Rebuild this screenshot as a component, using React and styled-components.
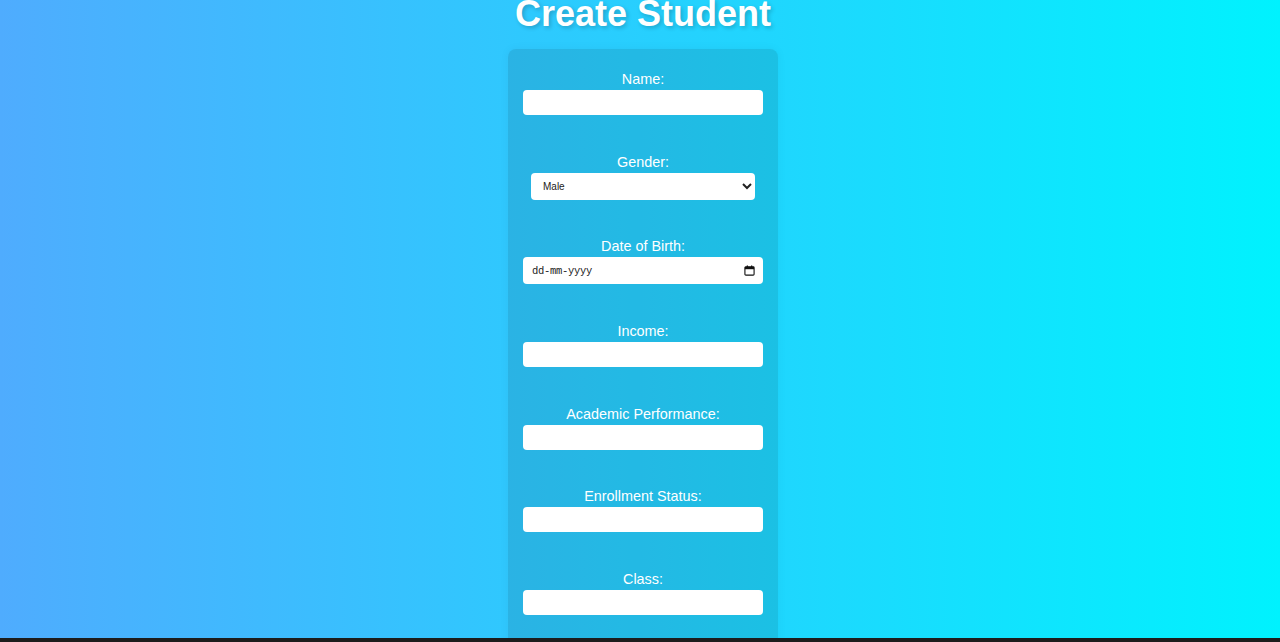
import React from "react";
import styled, { createGlobalStyle } from "styled-components";

const Global = createGlobalStyle`
  html, body { margin: 0; padding: 0; }
  body {
    min-height: 100vh;
    background: linear-gradient(to right, #4facfe 0%, #00f2fe 100%);
    background-attachment: fixed;
    font-family: "Liberation Sans", Arial, sans-serif;
    overflow: hidden;
  }
`;

const Page = styled.div`
  display: flex;
  flex-direction: column;
  align-items: center;
  padding-left: 6px;
`;

const Title = styled.h1`
  margin: -7px 0 14px;
  font-size: 36px;
  font-weight: bold;
  color: #fff;
  text-align: center;
  text-shadow: 2px 2px 4px rgba(0, 0, 0, 0.2);
`;

const Card = styled.form`
  width: 240px;
  padding: 22px 15px 30px;
  background: rgba(0, 0, 0, 0.1);
  border-radius: 8px;
  box-shadow: 0 0 10px rgba(0, 0, 0, 0.05);
  display: flex;
  flex-direction: column;
`;

const Group = styled.div`
  display: flex;
  flex-direction: column;
  align-items: center;
  margin-bottom: 38.67px;
`;

const Label = styled.label`
  display: block;
  color: #fff;
  font-size: 14.4px;
  line-height: 16px;
  margin-bottom: 3px;
  text-align: center;
`;

const TextInput = styled.input`
  box-sizing: border-box;
  width: 100%;
  height: 25px;
  border: none;
  border-radius: 4px;
  background: #fff;
  padding: 0 6px;
  font-family: "Liberation Sans", Arial, sans-serif;
  font-size: 12px;
  color: #222;
  outline: none;
`;

const DateBox = styled.div`
  box-sizing: border-box;
  width: 100%;
  height: 27px;
  border-radius: 4px;
  background: #fff;
  display: flex;
  align-items: center;
  padding: 0 8px 0 9px;
`;

const DateText = styled.input`
  flex: 1;
  min-width: 0;
  border: none;
  outline: none;
  background: transparent;
  padding: 0;
  font-family: "Liberation Mono", monospace;
  font-size: 10.5px;
  letter-spacing: -0.3px;
  color: #222;
  &::placeholder { color: #222; opacity: 1; }
`;

const CalIcon = styled.svg`
  width: 11px;
  height: 11px;
  flex: none;
`;

const Select = styled.select`
  box-sizing: border-box;
  width: 224px;
  height: 27px;
  border: none;
  border-radius: 4px;
  background: #fff;
  padding: 0 5px 0 8px;
  font-family: "Liberation Sans", Arial, sans-serif;
  font-size: 10px;
  color: #222;
  outline: none;
`;

const TaskStrip = styled.div`
  position: fixed;
  left: 0;
  right: 0;
  bottom: 0;
  height: 4px;
  background: #1c1c1c;
`;

const fields = [
  { label: "Name:", type: "text" },
  { label: "Gender:", type: "select" },
  { label: "Date of Birth:", type: "date" },
  { label: "Income:", type: "text" },
  { label: "Academic Performance:", type: "text" },
  { label: "Enrollment Status:", type: "text" },
  { label: "Class:", type: "text" },
];

function DateField() {
  return (
    <DateBox>
      <DateText type="text" placeholder="dd-mm-yyyy" />
      <CalIcon viewBox="0 0 12 12" aria-hidden="true">
        <rect x="1" y="2" width="10" height="9" rx="1" fill="none" stroke="#111" strokeWidth="1.2" />
        <rect x="1" y="2" width="10" height="2.6" fill="#111" />
        <rect x="3" y="0.5" width="1.3" height="2.5" fill="#111" />
        <rect x="7.7" y="0.5" width="1.3" height="2.5" fill="#111" />
      </CalIcon>
    </DateBox>
  );
}

export default function App() {
  return (
    <>
      <Global />
      <Page>
        <Title>Create Student</Title>
        <Card onSubmit={(e) => e.preventDefault()}>
          {fields.map((f) => (
            <Group key={f.label}>
              <Label>{f.label}</Label>
              {f.type === "select" ? (
                <Select defaultValue="Male">
                  <option>Male</option>
                  <option>Female</option>
                </Select>
              ) : f.type === "date" ? (
                <DateField />
              ) : (
                <TextInput type="text" />
              )}
            </Group>
          ))}
        </Card>
      </Page>
      <TaskStrip />
    </>
  );
}
